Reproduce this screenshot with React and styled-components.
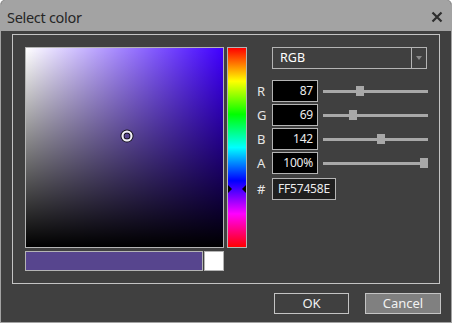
import React from 'react'
import styled, { createGlobalStyle } from 'styled-components'

const Global = createGlobalStyle`
  html, body { margin: 0; padding: 0; background: #ffffff; }
  * { box-sizing: border-box; }
`

const font = `"Noto Sans", "Open Sans", "Liberation Sans", sans-serif`

const Window = styled.div`
  width: 452px;
  height: 323px;
  border: 1px solid #a3a3a3;
  border-top: none;
  border-radius: 5px 5px 0 0;
  overflow: hidden;
  display: flex;
  flex-direction: column;
  font-family: ${font};
  background: #404040;
`

const TitleBar = styled.div`
  height: 31px;
  flex: none;
  background: #a3a3a3;
  display: flex;
  align-items: center;
  justify-content: space-between;
  padding: 2px 7px 0 6px;
`

const Title = styled.div`
  font-size: 14.5px;
  color: #262626;
  letter-spacing: -0.3px;
`

const Close = styled.div`
  width: 12px;
  height: 12px;
  margin-right: 1px;
  display: flex;
  svg { display: block; }
`

const Body = styled.div`
  flex: 1;
  display: flex;
  flex-direction: column;
  padding: 3px 0 0 11px;
`

const GroupBox = styled.div`
  width: 428px;
  height: 250px;
  border: 1px solid #c4c4c4;
  padding: 12px 0 0 12px;
  display: flex;
`

const LeftCol = styled.div`
  display: flex;
  flex-direction: column;
  gap: 3px;
`

const PickRow = styled.div`
  display: flex;
  gap: 3px;
`

const SVBox = styled.div`
  position: relative;
  width: 199px;
  height: 201px;
  border: 1px solid #b4b4b4;
  background:
    linear-gradient(to top, #000, rgba(0, 0, 0, 0)),
    linear-gradient(to right, #fff, rgba(255, 255, 255, 0)),
    ${p => p.$hue};
`

const Cursor = styled.div`
  position: absolute;
  width: 11px;
  height: 11px;
  border-radius: 50%;
  border: 2px solid #f2f2f2;
  box-shadow: 0 0 0 1px #111, inset 0 0 0 1px #111;
  transform: translate(-50%, -50%);
`

const HueBar = styled.div`
  position: relative;
  width: 20px;
  height: 201px;
  border: 1px solid #b4b4b4;
  background: linear-gradient(
    to bottom,
    #ff0000 0%,
    #ffff00 16.67%,
    #00ff00 33.33%,
    #00ffff 50%,
    #0000ff 66.67%,
    #ff00ff 83.33%,
    #ff0000 100%
  );
`

const HueMark = styled.div`
  position: absolute;
  width: 0;
  height: 0;
  border-top: 4px solid transparent;
  border-bottom: 4px solid transparent;
  transform: translateY(-50%);
  ${p => (p.$side === 'left'
    ? 'left: 0; border-left: 4px solid #000;'
    : 'right: 0; border-right: 4px solid #000;')}
`

const SwatchRow = styled.div`
  display: flex;
  gap: 1px;
`

const Swatch = styled.div`
  width: ${p => p.$w}px;
  height: 20px;
  border: 1px solid #b4b4b4;
  background: ${p => p.$color};
`

const RightCol = styled.div`
  display: grid;
  grid-template-columns: 20px 46px 105px;
  column-gap: 5px;
  align-content: start;
`

const Select = styled.div`
  grid-column: 2 / 4;
  width: 155px;
  height: 22px;
  border: 1px solid #b4b4b4;
  display: flex;
  margin-bottom: 11px;
`

const SelectText = styled.div`
  flex: 1;
  color: #ffffff;
  font-size: 12.5px;
  line-height: 20px;
  padding-left: 7px;
`

const SelectArrow = styled.div`
  width: 15px;
  border-left: 1px solid #b4b4b4;
  display: flex;
  align-items: center;
  justify-content: center;
  &::after {
    content: '';
    border-left: 3px solid transparent;
    border-right: 3px solid transparent;
    border-top: 4px solid #8a8a8a;
  }
`

const Label = styled.div`
  color: #e6e6e6;
  font-size: 13px;
  line-height: 22px;
  padding-left: 10px;
  margin-bottom: ${p => p.$mb}px;
`

const ValueBox = styled.div`
  height: 22px;
  border: 1px solid #b4b4b4;
  background: ${p => (p.$hex ? '#1f1f1f' : '#000')};
  color: #ececec;
  font-size: 12px;
  letter-spacing: -0.2px;
  line-height: 20px;
  text-align: ${p => (p.$hex ? 'center' : 'right')};
  padding: 0 4px;
  width: ${p => (p.$hex ? 64 : 46)}px;
  white-space: nowrap;
  margin-bottom: ${p => p.$mb}px;
`

const Slider = styled.div`
  position: relative;
  height: 22px;
  display: flex;
  align-items: center;
  margin-bottom: ${p => p.$mb}px;
  &::before {
    content: '';
    display: block;
    width: 100%;
    height: 3px;
    background: #a8a8a8;
  }
`

const Thumb = styled.div`
  position: absolute;
  top: 6px;
  width: 8px;
  height: 10px;
  background: #a8a8a8;
`

const Footer = styled.div`
  display: flex;
  justify-content: flex-end;
  gap: 16px;
  padding: 9px 10px 0 0;
`

const Button = styled.div`
  width: ${p => p.$w}px;
  height: 21px;
  border: 1px solid #c4c4c4;
  background: ${p => (p.$primary ? '#404040' : '#808080')};
  color: #f2f2f2;
  font-size: 13px;
  line-height: 19px;
  text-align: center;
`

const rows = [
  { label: 'R', value: '87', frac: 87 / 255 },
  { label: 'G', value: '69', frac: 69 / 255 },
  { label: 'B', value: '142', frac: 142 / 255 },
  { label: 'A', value: '100%', frac: 1 },
]

export default function App() {
  const sat = (142 - 69) / 142
  const val = 142 / 255
  const hue = 255 / 360
  return (
    <>
      <Global />
      <Window>
        <TitleBar>
          <Title>Select color</Title>
          <Close>
            <svg width="12" height="12" viewBox="0 0 12 12">
              <path d="M1.5 1.5 L10.5 10.5 M10.5 1.5 L1.5 10.5" stroke="#2e2e2e" strokeWidth="2.2" />
            </svg>
          </Close>
        </TitleBar>
        <Body>
          <GroupBox>
            <LeftCol>
              <PickRow>
                <SVBox $hue="#4000ff">
                  <Cursor style={{ left: `${sat * 197}px`, top: `${(1 - val) * 199}px` }} />
                </SVBox>
                <HueBar>
                  <HueMark $side="left" style={{ top: `${hue * 199}px` }} />
                  <HueMark $side="right" style={{ top: `${hue * 199}px` }} />
                </HueBar>
              </PickRow>
              <SwatchRow>
                <Swatch $w={178} $color="#57458e" />
                <Swatch $w={20} $color="#ffffff" />
              </SwatchRow>
            </LeftCol>
            <RightCol>
              <Select>
                <SelectText>RGB</SelectText>
                <SelectArrow />
              </Select>
              {rows.map((r, i) => {
                const mb = i === 3 ? 4 : 2
                return (
                  <React.Fragment key={r.label}>
                    <Label $mb={mb}>{r.label}</Label>
                    <ValueBox $mb={mb}>{r.value}</ValueBox>
                    <Slider $mb={mb}>
                      <Thumb style={{ left: `${r.frac * 97}px` }} />
                    </Slider>
                  </React.Fragment>
                )
              })}
              <Label $mb={0}>#</Label>
              <ValueBox $hex $mb={0}>FF57458E</ValueBox>
            </RightCol>
          </GroupBox>
          <Footer>
            <Button $primary $w={75}>OK</Button>
            <Button $w={76}>Cancel</Button>
          </Footer>
        </Body>
      </Window>
    </>
  )
}
